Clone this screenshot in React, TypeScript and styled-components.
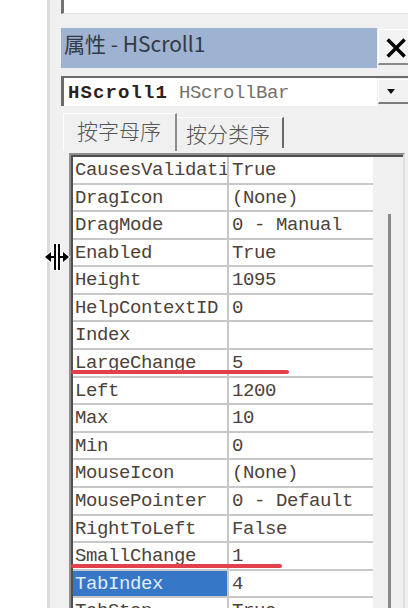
import React from 'react';
import styled, { createGlobalStyle } from 'styled-components';

const Global = createGlobalStyle`
  html, body { margin: 0; padding: 0; background: #ffffff; }
  body { font-family: "Liberation Mono", "DejaVu Sans Mono", monospace; }
  * { box-sizing: border-box; }
`;

const Screen = styled.div`
  position: relative;
  width: 408px;
  height: 608px;
  overflow: hidden;
  display: flex;
  background: #ffffff;
`;

const Gutter = styled.div`
  width: 47px;
  flex-shrink: 0;
  background: #ffffff;
`;

const Panel = styled.div`
  flex: 1;
  min-width: 0;
  background: #f0f0f0;
  border-left: 3px solid #dcdcdc;
  padding-left: 11px;
  display: flex;
  flex-direction: column;
`;

const TopBox = styled.div`
  height: 14px;
  flex-shrink: 0;
  background: #ffffff;
  border-left: 3px solid #727272;
  border-bottom: 1px solid #e2e2e2;
`;

const TitleRow = styled.div`
  margin-top: 14px;
  height: 40px;
  flex-shrink: 0;
  display: flex;
`;

const TitleBar = styled.div`
  flex: 1;
  background: #9db3d1;
  color: #333a44;
  font-family: "Noto Sans CJK SC", "Noto Sans", sans-serif;
  font-size: 21px;
  line-height: 30px;
  padding-left: 3px;
  white-space: nowrap;
`;

const CloseButton = styled.div`
  width: 30px;
  height: 36px;
  margin: 1px 0 0 1px;
  flex-shrink: 0;
  background: #f3f3f3;
  border-top: 1px solid #ffffff;
  border-left: 1px solid #ffffff;
  border-bottom: 2px solid #8a8a8a;
  padding: 7px 0 0 7px;
  overflow: hidden;
  display: flex;
`;

const ComboRow = styled.div`
  margin-top: 8px;
  height: 30px;
  flex-shrink: 0;
  display: flex;
  border-top: 2px solid #6b6b6b;
`;

const ComboField = styled.div`
  flex: 1;
  background: #ffffff;
  border-left: 3px solid #6b6b6b;
  padding: 3px 0 0 4px;
  font-size: 19px;
  letter-spacing: -0.4px;
  line-height: 25px;
  white-space: nowrap;
`;

const ObjectName = styled.span`
  font-weight: bold;
  letter-spacing: 1.1px;
  color: #2c2218;
`;

const ObjectType = styled.span`
  margin-left: 11px;
  color: #74706c;
`;

const ComboButton = styled.div`
  width: 30px;
  flex-shrink: 0;
  margin: 1px 0 2px 1px;
  background: #f2f2f2;
  border-top: 1px solid #ffffff;
  border-left: 1px solid #ffffff;
  border-bottom: 2px solid #7c7c7c;
  display: flex;
  align-items: center;
  padding-left: 8px;
`;

const TabStrip = styled.div`
  margin-top: 7px;
  height: 38px;
  flex-shrink: 0;
  display: flex;
  align-items: flex-start;
  padding-left: 2px;
`;

const Tab = styled.div<{ $active?: boolean }>`
  font-family: "Noto Sans CJK SC", "Noto Sans", sans-serif;
  font-weight: 300;
  font-size: 21px;
  line-height: 30px;
  color: #555555;
  white-space: nowrap;
  background: #f0f0f0;
  border-top: 1px solid #ffffff;
  width: ${(p) => (p.$active ? '114px' : '107px')};
  height: ${(p) => (p.$active ? '38px' : '31px')};
  margin-top: ${(p) => (p.$active ? '0' : '4px')};
  padding-top: ${(p) => (p.$active ? '1px' : '0')};
  padding-left: ${(p) => (p.$active ? '13px' : '9px')};
  border-left: ${(p) => (p.$active ? '1px solid #ffffff' : 'none')};
  border-right: 2px solid ${(p) => (p.$active ? '#8c8c8c' : '#696969')};
`;

const GridFrame = styled.div`
  margin: 2px 3px 0 8px;
  flex: 1;
  min-height: 0;
  display: flex;
  border-top: 2px solid #8e8e8e;
  border-left: 2px solid #8e8e8e;
  border-right: 2px solid #e0e0e0;
`;

const GridInner = styled.div`
  flex: 1;
  display: flex;
  border-top: 2px solid #4f4f4f;
  border-left: 2px solid #4f4f4f;
`;

const Rows = styled.div`
  width: 300px;
  flex-shrink: 0;
  background: #ffffff;
  display: flex;
  flex-direction: column;
`;

const Row = styled.div`
  height: 27.58px;
  flex-shrink: 0;
  display: flex;
  border-bottom: 2px solid #c8c8c8;
  font-size: 19px;
  letter-spacing: -0.4px;
  white-space: nowrap;
`;

const NameCell = styled.div<{ $selected?: boolean }>`
  width: 156px;
  flex-shrink: 0;
  overflow: hidden;
  border-right: 2px solid #c8c8c8;
  padding: 1px 0 0 2px;
  line-height: 24.58px;
  background: ${(p) => (p.$selected ? '#3677c7' : 'transparent')};
  color: ${(p) => (p.$selected ? '#e2ecf8' : '#4d4238')};
`;

const ValueCell = styled.div`
  flex: 1;
  padding: 1px 0 0 3px;
  line-height: 24.58px;
  color: #4d4238;
  overflow: hidden;
`;

const ScrollTrack = styled.div`
  flex: 1;
  background: #f0f0f0;
  display: flex;
  padding: 57px 0 0 15px;
`;

const ScrollThumb = styled.div`
  width: 3px;
  background: #8a8a8a;
`;

const Annotation = styled.div<{ $top: number; $left: number; $width: number }>`
  position: absolute;
  top: ${(p) => p.$top}px;
  left: ${(p) => p.$left}px;
  width: ${(p) => p.$width}px;
  height: 4px;
  border-radius: 2px;
  background: #e2404c;
`;

const CursorLayer = styled.div`
  position: absolute;
  left: 44px;
  top: 243px;
  width: 28px;
  height: 28px;
`;

const rows: [string, string][] = [
  ['CausesValidati', 'True'],
  ['DragIcon', '(None)'],
  ['DragMode', '0 - Manual'],
  ['Enabled', 'True'],
  ['Height', '1095'],
  ['HelpContextID', '0'],
  ['Index', ''],
  ['LargeChange', '5'],
  ['Left', '1200'],
  ['Max', '10'],
  ['Min', '0'],
  ['MouseIcon', '(None)'],
  ['MousePointer', '0 - Default'],
  ['RightToLeft', 'False'],
  ['SmallChange', '1'],
  ['TabIndex', '4'],
  ['TabStop', 'True'],
];

const CloseIcon = () => (
  <svg width="26" height="22" viewBox="0 0 26 22">
    <path d="M2 1 L22 21 M22 1 L2 21" stroke="#000" strokeWidth="4" strokeLinecap="butt" />
  </svg>
);

const DropArrow = () => (
  <svg width="8" height="5" viewBox="0 0 8 5">
    <polygon points="0,0 8,0 4,5" fill="#111" />
  </svg>
);

const ResizeCursor = () => (
  <svg width="28" height="28" viewBox="0 0 28 28">
    <g stroke="#fff" strokeWidth="2" fill="#fff">
      <rect x="10" y="1" width="2" height="26" />
      <rect x="14" y="1" width="2" height="26" />
      <polygon points="1,14 7,9 7,19" />
      <polygon points="25,14 19,9 19,19" />
      <rect x="6" y="13" width="4" height="2" />
      <rect x="16" y="13" width="4" height="2" />
    </g>
    <g fill="#000">
      <rect x="10" y="1" width="2" height="26" />
      <rect x="14" y="1" width="2" height="26" />
      <polygon points="1,14 7,9 7,19" />
      <polygon points="25,14 19,9 19,19" />
      <rect x="6" y="13" width="4" height="2" />
      <rect x="16" y="13" width="4" height="2" />
    </g>
  </svg>
);

export default function App() {
  return (
    <>
      <Global />
      <Screen>
        <Gutter />
        <Panel>
          <TopBox />
          <TitleRow>
            <TitleBar>属性 - HScroll1</TitleBar>
            <CloseButton>
              <CloseIcon />
            </CloseButton>
          </TitleRow>
          <ComboRow>
            <ComboField>
              <ObjectName>HScroll1</ObjectName>
              <ObjectType>HScrollBar</ObjectType>
            </ComboField>
            <ComboButton>
              <DropArrow />
            </ComboButton>
          </ComboRow>
          <TabStrip>
            <Tab $active>按字母序</Tab>
            <Tab>按分类序</Tab>
          </TabStrip>
          <GridFrame>
            <GridInner>
              <Rows>
                {rows.map(([name, value]) => (
                  <Row key={name}>
                    <NameCell $selected={name === 'TabIndex'}>{name}</NameCell>
                    <ValueCell>{value}</ValueCell>
                  </Row>
                ))}
              </Rows>
              <ScrollTrack>
                <ScrollThumb />
              </ScrollTrack>
            </GridInner>
          </GridFrame>
        </Panel>
        <Annotation $top={370} $left={71} $width={218} />
        <Annotation $top={564} $left={71} $width={211} />
        <CursorLayer>
          <ResizeCursor />
        </CursorLayer>
      </Screen>
    </>
  );
}
